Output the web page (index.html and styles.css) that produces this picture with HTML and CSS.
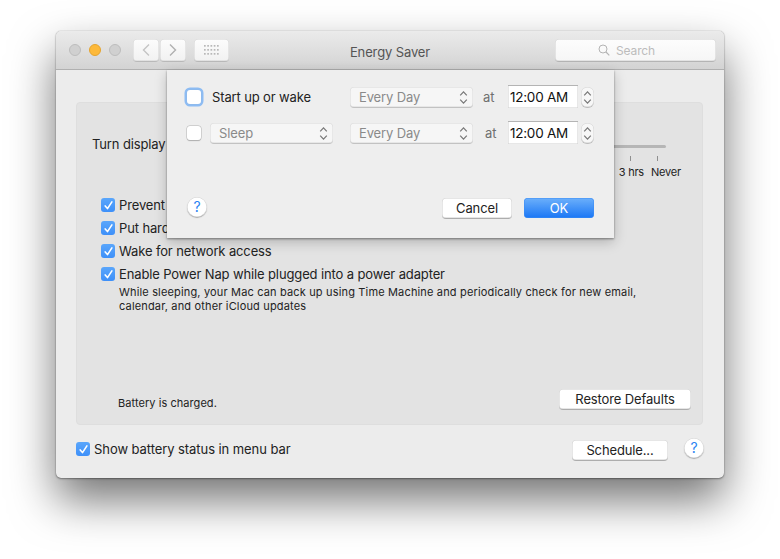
FILE: index.html
```html
<!DOCTYPE html>
<html lang="en">
<head>
<meta charset="utf-8">
<title>Energy Saver</title>
<link rel="stylesheet" href="styles.css">
</head>
<body>
<svg class="defs" width="0" height="0" aria-hidden="true">
  <symbol id="check" viewBox="0 0 15 15"><path d="M4.2 7.9 6.5 10.6 10.9 3.9" fill="none" stroke="#fff" stroke-width="1.6" stroke-linecap="round" stroke-linejoin="round"/></symbol>
  <symbol id="updown" viewBox="0 0 9 15"><path d="M1.2 5.4 4.5 1.8 7.8 5.4M1.2 9.6 4.5 13.2 7.8 9.6" fill="none" stroke="#777" stroke-width="1.2"/></symbol>
</svg>
<div class="window">
  <header class="titlebar">
    <div class="tools">
      <div class="lights"><i class="light"></i><i class="light amber"></i><i class="light"></i></div>
      <div class="nav">
        <button class="tool nav-btn"><svg width="10" height="14" viewBox="0 0 10 14"><path d="M8 1.5 2.5 7 8 12.5" fill="none" stroke="#c4c4c4" stroke-width="1.4"/></svg></button>
        <button class="tool nav-btn"><svg width="10" height="14" viewBox="0 0 10 14"><path d="M2 1.5 7.500 7 2 12.5" fill="none" stroke="#b0b0b0" stroke-width="1.4"/></svg></button>
      </div>
      <button class="tool grid-btn"><svg width="15" height="10" viewBox="0 0 15 10" fill="#b8b8b8"><rect x="0" y="0" width="1.700" height="1.700"/><rect x="3.250" y="0" width="1.700" height="1.700"/><rect x="6.500" y="0" width="1.700" height="1.700"/><rect x="9.750" y="0" width="1.700" height="1.700"/><rect x="13" y="0" width="1.700" height="1.700"/><rect x="0" y="4" width="1.700" height="1.700"/><rect x="3.250" y="4" width="1.700" height="1.700"/><rect x="6.500" y="4" width="1.700" height="1.700"/><rect x="9.750" y="4" width="1.700" height="1.700"/><rect x="13" y="4" width="1.700" height="1.700"/><rect x="0" y="8" width="1.700" height="1.700"/><rect x="3.250" y="8" width="1.700" height="1.700"/><rect x="6.500" y="8" width="1.700" height="1.700"/><rect x="9.750" y="8" width="1.700" height="1.700"/><rect x="13" y="8" width="1.700" height="1.700"/></svg></button>
    </div>
    <h1 class="title">Energy Saver</h1>
    <div class="search-wrap">
      <div class="search">
        <svg width="12" height="12" viewBox="0 0 12 12"><circle cx="5" cy="5" r="4" fill="none" stroke="#b4b4b4" stroke-width="1"/><path d="M8 8 11.300 11.300" stroke="#b4b4b4" stroke-width="1.200"/></svg>
        <span>Search</span>
      </div>
    </div>
  </header>

  <main class="content">
    <section class="panel">
      <div class="display-row">
        <span class="label">Turn display off after:</span>
        <div class="slider">
          <div class="track"></div>
          <div class="ticks"><i></i><i></i></div>
          <div class="tick-labels"><span>3 hrs</span><span>Never</span></div>
        </div>
      </div>
      <ul class="options">
        <li class="option"><span class="box on"><svg width="15" height="15"><use href="#check"/></svg></span><span>Prevent</span></li>
        <li class="option"><span class="box on"><svg width="15" height="15"><use href="#check"/></svg></span><span>Put hard disks</span></li>
        <li class="option"><span class="box on"><svg width="15" height="15"><use href="#check"/></svg></span><span>Wake for network access</span></li>
        <li class="option"><span class="box on"><svg width="15" height="15"><use href="#check"/></svg></span><span>Enable Power Nap while plugged into a power adapter</span></li>
      </ul>
      <p class="note">While sleeping, your Mac can back up using Time Machine and periodically check for new email,<br>calendar, and other iCloud updates</p>
      <div class="panel-foot">
        <span class="status">Battery is charged.</span>
        <button class="btn restore">Restore Defaults</button>
      </div>
    </section>
    <footer class="win-foot">
      <label class="option battery"><span class="box on"><svg width="15" height="15"><use href="#check"/></svg></span><span>Show battery status in menu bar</span></label>
      <button class="btn schedule">Schedule...</button>
      <button class="help help-raised">?</button>
    </footer>
  </main>

  <aside class="sheet">
    <div class="sheet-row first">
      <span class="box off focus"></span>
      <span class="sheet-label">Start up or wake</span>
      <div class="popup day"><span>Every Day</span><svg width="9" height="15"><use href="#updown"/></svg></div>
      <span class="at">at</span>
      <div class="time">12:00 AM</div>
      <div class="stepper"><svg width="9" height="15"><use href="#updown"/></svg></div>
    </div>
    <div class="sheet-row second">
      <span class="box off"></span>
      <div class="popup sleep"><span>Sleep</span><svg width="9" height="15"><use href="#updown"/></svg></div>
      <div class="popup day"><span>Every Day</span><svg width="9" height="15"><use href="#updown"/></svg></div>
      <span class="at shifted">at</span>
      <div class="time">12:00 AM</div>
      <div class="stepper"><svg width="9" height="15"><use href="#updown"/></svg></div>
    </div>
    <div class="sheet-foot">
      <button class="help">?</button>
      <button class="btn cancel">Cancel</button>
      <button class="btn ok">OK</button>
    </div>
  </aside>
</div>
</body>
</html>
```

FILE: styles.css
```css
* { box-sizing: border-box; }
html, body { height: 100%; }
body {
  margin: 0;
  padding: 31px 56px 0;
  background: #fff;
  overflow: hidden;
  font-family: "Inter", "Liberation Sans", sans-serif;
  font-size: 13px;
  letter-spacing: -.13px;
  color: #222;
}
.defs { position: absolute; }
button { font: inherit; letter-spacing: inherit; margin: 0; padding: 0; }
ul { list-style: none; margin: 0; padding: 0; }
h1, p { margin: 0; font-weight: 400; }

.window {
  position: relative;
  width: 668px;
  height: 447px;
  background: #ececec;
  border-radius: 5px;
  box-shadow: 0 0 1px rgba(0,0,0,.45), 0 1px 2px rgba(0,0,0,.35), 0 22px 45px rgba(0,0,0,.55);
}
.titlebar {
  display: grid;
  grid-template-columns: 1fr auto 1fr;
  align-items: center;
  height: 39px;
  padding: 0 8px 0 13px;
  background: linear-gradient(#ebebeb, #d3d3d3);
  border-bottom: 1px solid #b0b0b0;
  border-radius: 5px 5px 0 0;
}
.tools { display: flex; align-items: center; }
.lights { display: flex; gap: 8px; margin-right: 12px; }
.light { width: 12px; height: 12px; border-radius: 50%; background: #d0d0d0; border: 1px solid #bdbdbd; }
.light.amber { background: #fdb93a; border-color: #e5a42e; }
.nav { display: flex; gap: 1px; margin-right: 8px; }
.tool {
  display: flex; align-items: center; justify-content: center;
  height: 22px;
  background: linear-gradient(#fcfcfc, #f1f1f1);
  border: 0;
  border-radius: 4px;
  box-shadow: inset 0 0 0 .5px #d2d2d2, 0 1px 0 #b9b9b9;
}
.nav-btn { width: 26px; }
.grid-btn { width: 35px; }
.title { margin-right: 5px; font-size: 13px; color: #555; transform: translateY(2px); }
.search-wrap { display: flex; justify-content: flex-end; }
.search {
  display: flex; align-items: center; justify-content: center; gap: 6px;
  width: 161px; height: 22px;
  padding-right: 18px;
  background: linear-gradient(#fdfdfd, #f6f6f6);
  border-radius: 4px;
  box-shadow: inset 0 0 0 .5px #cfcfcf, 0 1px 0 #b4b4b4;
  color: #bcbcbc;
  font-size: 12px;
}

.content { padding: 32px 21px 0 20px; }
.panel {
  display: flex; flex-direction: column;
  height: 323px;
  padding: 32px 11px 0 15px;
  background: #e3e3e3;
  border: 1px solid #dedede;
  border-radius: 4px;
}
.display-row { display: flex; align-items: flex-start; height: 62px; }
.label { line-height: 18px; white-space: nowrap; }
.slider { flex: 1; margin: 10px 25px 0 20px; }
.track { height: 3px; background: #b6b6b6; border-radius: 2px; }
.ticks { display: flex; justify-content: flex-end; gap: 26px; margin: 8px 8px 0 0; }
.ticks i { width: 1px; height: 5px; background: #8f8f8f; }
.tick-labels { display: flex; justify-content: flex-end; gap: 7px; margin: 5px -15px 0 0; font-size: 11px; line-height: 13px; letter-spacing: -.2px; }

.options { display: flex; flex-direction: column; gap: 8px; padding-left: 9px; }
.option { display: flex; align-items: center; gap: 4px; height: 15px; white-space: nowrap; }
.box { display: block; flex: none; width: 14px; height: 14px; border-radius: 3px; }
.box svg { display: block; }
.box.on { background: linear-gradient(#5aa6fb, #3e90f9); }
.box.off { background: #fff; box-shadow: 0 0 0 .5px #b8b8b8, 0 .5px 1px #a8a8a8; }
.box.focus { box-shadow: 0 0 0 .5px #8fb8e8, 0 0 0 2.500px #8dbcf3; }
.note { margin: 4px 0 0 27px; font-size: 11px; line-height: 14px; letter-spacing: .16px; color: #222; }
.panel-foot { display: flex; align-items: center; justify-content: space-between; margin-top: auto; padding: 0 0 15px 26px; }
.status { font-size: 11px; letter-spacing: .06px; position: relative; top: 4px; }

.btn {
  display: block;
  height: 20px;
  background: #fff;
  border: 0;
  border-radius: 4px;
  box-shadow: inset 0 0 0 .5px #cdcdcd, 0 1px 0 #adadad;
  color: #222;
  text-align: center;
}
.restore { width: 132px; }
.win-foot { display: flex; align-items: flex-start; padding-top: 13px; }
.battery { margin-top: 3px; letter-spacing: -.07px; }
.schedule { width: 96px; margin: 2px 16px 0 auto; }
.help {
  display: block;
  flex: none;
  width: 20px; height: 20px;
  background: #fff;
  border: 0; border-radius: 50%;
  box-shadow: inset 0 0 0 .5px #cfcfcf, 0 1px 1px #aaa;
  color: #2a84f2;
  font-size: 14px;
  line-height: 20px;
  text-align: center;
}
.help-raised { margin-right: -1px; }

.sheet {
  position: absolute;
  left: 111px; top: 39px;
  width: 447px; height: 168px;
  padding: 15px 20px 0 20px;
  background: #eeeeee;
  box-shadow: 0 1px 2px rgba(0,0,0,.4), 0 4px 12px rgba(0,0,0,.22);
}
.sheet-row { display: flex; align-items: center; height: 23px; }
.sheet-row.second { margin-top: 13px; }
.sheet-label { margin-left: 11px; width: 138px; white-space: nowrap; }
.sheet-row .popup.sleep { margin: 1px 17px 0 9px; }
.popup {
  display: flex; align-items: center; justify-content: space-between;
  height: 20px;
  margin-top: 1px;
  padding: 0 5px 0 9px;
  background: #f6f6f6;
  border-radius: 4px;
  box-shadow: inset 0 0 0 .5px #d8d8d8, 0 1px 0 #c2c2c2;
  color: #8a8a8a;
}
.day, .sleep { width: 123px; }
.at { margin-left: 10px; width: 25px; color: #6f6f6f; white-space: nowrap; }
.at.shifted { margin-left: 12px; width: 23px; }
.time {
  width: 70px; height: 23px;
  padding-left: 2px;
  background: #fff;
  box-shadow: inset 0 1px 0 #b4b4b4, inset 0 0 0 .5px #cfcfcf;
  font-size: 13.5px;
  letter-spacing: -.25px;
  line-height: 24px;
  color: #111;
  white-space: nowrap;
}
.stepper {
  display: flex; align-items: center; justify-content: center;
  width: 13px; height: 20px;
  margin: 1px 0 0 3px;
  background: #f7f7f7;
  border-radius: 6px;
  box-shadow: inset 0 0 0 .5px #d2d2d2, 0 1px 0 #bdbdbd;
}
.sheet-foot { display: flex; align-items: flex-start; margin-top: 53px; }
.cancel { width: 70px; margin: 1px 0 0 auto; }
.ok { width: 70px; margin: 1px 0 0 12px; background: linear-gradient(#6cb0fb, #1a76f5); color: #fff; box-shadow: inset 0 0 0 .5px #3c8df5; }
```
